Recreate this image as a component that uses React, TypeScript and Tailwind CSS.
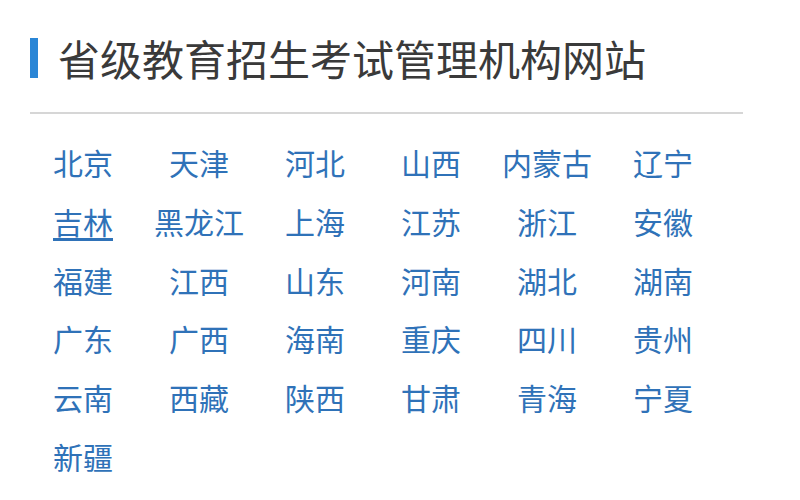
import React from "react";

const provinces = [
  "北京", "天津", "河北", "山西", "内蒙古", "辽宁",
  "吉林", "黑龙江", "上海", "江苏", "浙江", "安徽",
  "福建", "江西", "山东", "河南", "湖北", "湖南",
  "广东", "广西", "海南", "重庆", "四川", "贵州",
  "云南", "西藏", "陕西", "甘肃", "青海", "宁夏",
  "新疆",
];

export default function App() {
  return (
    <div
      className="w-[800px] h-[500px] bg-white overflow-hidden pl-[25px]"
      style={{ fontFamily: '"Noto Sans CJK SC", "Noto Sans", sans-serif' }}
    >
      <div className="w-[713px] ml-[5px] pt-[38px]">
        <div className="flex items-center h-[40px]">
          <div className="w-[8px] h-[40px] bg-[#2a86d6]" />
          <h1 className="ml-[20px] text-[42px] leading-none text-[#3a3a3a] font-normal">
            省级教育招生考试管理机构网站
          </h1>
        </div>
        <div className="mt-[34px] h-[2px] bg-[#d6d6d6]" />
      </div>
      <div className="grid grid-cols-[repeat(6,116px)] pt-[28px]">
        {provinces.map((p) => (
          <div key={p} className="h-[58.8px] flex justify-center items-start">
            <a
              href="#"
              className={
                "text-[30px] leading-[40px] text-[#2f72b8] " +
                (p === "吉林" ? "underline underline-offset-[4px]" : "no-underline")
              }
            >
              {p}
            </a>
          </div>
        ))}
      </div>
    </div>
  );
}
